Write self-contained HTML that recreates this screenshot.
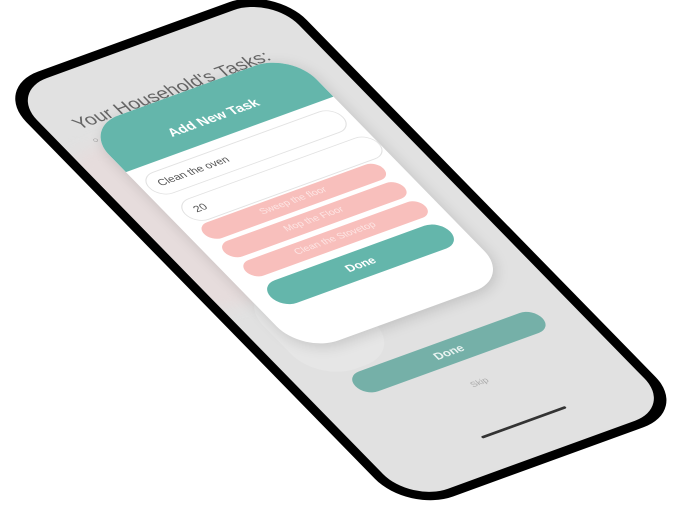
<!DOCTYPE html>
<html><head><meta charset="utf-8"><style>
html,body{margin:0;padding:0;background:#fff;width:675px;height:498px;overflow:hidden}
.phone{position:absolute;left:0;top:0;width:300px;height:600px;transform-origin:0 0;
transform:matrix(0.935,-0.34,0.692,0.708,-7,88);background:#000;border-radius:48px;font-family:"Liberation Sans",sans-serif}
.screen{position:absolute;left:10px;top:10px;right:10px;bottom:10px;background:#e1e1e1;border-radius:40px;overflow:hidden}
.abs{position:absolute}
.pill{position:absolute;border-radius:16px;text-align:center;color:#fff}
</style></head><body>
<div class="phone">
<div class="screen">
 <div class="abs" style="left:-30px;top:90px;width:160px;height:220px;background:#e6dcdc;border-radius:50px;filter:blur(8px)"></div>
 <div class="abs" style="left:20px;top:300px;width:90px;height:120px;background:#e6e6e6;border-radius:40px"></div>
 <div class="abs" style="left:26px;top:50px;font-size:19px;color:#666;white-space:nowrap">Your Household's Tasks:</div>
 <div class="abs" style="left:28px;top:78px;font-size:9px;color:#888">○</div>
 <div class="pill" style="left:46px;top:424px;width:200px;height:28px;line-height:28px;background:#75b0a8;font-size:12px;font-weight:bold;color:#e8f3f1">Done</div>
 <div class="abs" style="left:138px;top:476px;font-size:9px;color:#aaa">Skip</div>
 <div class="abs" style="left:106px;top:538px;width:90px;height:3px;background:#333;border-radius:2px"></div>
</div>
<div class="abs" style="left:40px;top:76px;width:222px;height:318px;background:#fff;border-radius:38px;overflow:hidden;box-shadow:0 4px 14px rgba(0,0,0,.15)">
 <div class="abs" style="left:0;top:0;width:222px;height:62px;background:#64b6ab"></div>
 <div class="abs" style="left:0;top:30px;width:222px;text-align:center;color:#fff;font-weight:bold;font-size:14px">Add New Task</div>
 <div class="abs" style="left:6px;top:72px;width:206px;height:28px;border:1px solid #e2e2e2;border-radius:15px;background:#fff;line-height:28px;font-size:11px;color:#555;text-indent:10px">Clean the oven</div>
 <div class="abs" style="left:14px;top:113px;width:206px;height:28px;border:1px solid #e2e2e2;border-radius:15px;background:#fff;line-height:28px;font-size:11px;color:#555;text-indent:10px">20</div>
 <div class="pill" style="left:14px;top:145px;width:192px;height:22px;line-height:22px;background:#f8bfbc;font-size:10px;color:#fde5e4">Sweep the floor</div>
 <div class="pill" style="left:16px;top:172px;width:192px;height:22px;line-height:22px;background:#f8bfbc;font-size:10px;color:#fde5e4">Mop the Floor</div>
 <div class="pill" style="left:18px;top:200px;width:192px;height:22px;line-height:22px;background:#f8bfbc;font-size:10px;color:#fde5e4">Clean the Stovetop</div>
 <div class="pill" style="left:18px;top:231px;width:192px;height:32px;line-height:32px;background:#64b6ab;font-size:12px;font-weight:bold">Done</div>
</div>
</div>
</body></html>
